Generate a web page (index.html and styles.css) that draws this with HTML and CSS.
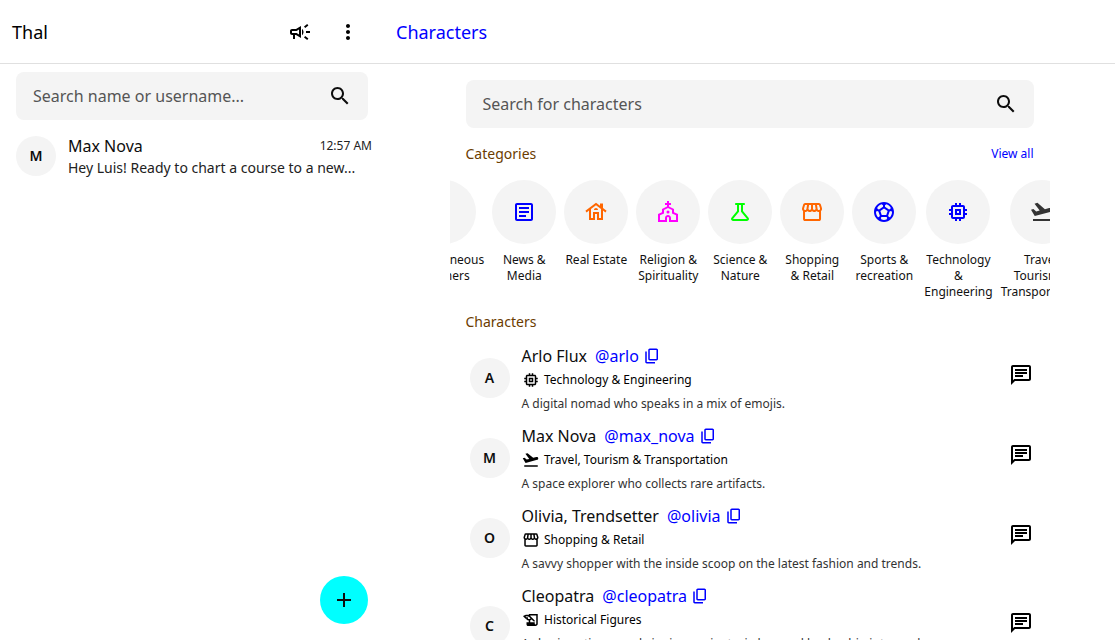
FILE: index.html
```html
<!DOCTYPE html>
<html lang="en">
<head>
<meta charset="utf-8">
<title>Thal</title>
<link rel="stylesheet" href="styles.css">
</head>
<body>
<svg class="sprite" aria-hidden="true">
  <symbol id="search" viewBox="0 0 24 24"><path d="M15.5 14h-.79l-.28-.27C15.41 12.59 16 11.11 16 9.5 16 5.91 13.09 3 9.5 3S3 5.91 3 9.5 5.91 16 9.5 16c1.61 0 3.09-.59 4.23-1.57l.27.28v.79l5 4.99L20.49 19zm-6 0C7.01 14 5 11.99 5 9.5S7.01 5 9.5 5 14 7.01 14 9.5 11.99 14 9.5 14"/></symbol>
  <symbol id="campaign" viewBox="0 0 24 24"><path d="M18 11v2h4v-2zm-2 6.61c.96.71 2.21 1.65 3.2 2.39.4-.53.8-1.07 1.2-1.6-.99-.74-2.24-1.68-3.2-2.4-.4.54-.8 1.08-1.2 1.61M20.4 5.6c-.4-.53-.8-1.07-1.2-1.6-.99.74-2.24 1.68-3.2 2.4.4.53.8 1.07 1.2 1.6.96-.72 2.21-1.65 3.2-2.4M4 9c-1.1 0-2 .9-2 2v2c0 1.1.9 2 2 2h1v4h2v-4h1l5 3V6L8 9zm5.03 1.71L11 9.53v4.94l-1.97-1.18-.48-.29H4v-2h4.55zM15.5 12c0-1.33-.58-2.53-1.5-3.35v6.69c.92-.81 1.5-2.01 1.5-3.34"/></symbol>
  <symbol id="more" viewBox="0 0 24 24"><path d="M12 8c1.1 0 2-.9 2-2s-.9-2-2-2-2 .9-2 2 .9 2 2 2m0 2c-1.1 0-2 .9-2 2s.9 2 2 2 2-.9 2-2-.9-2-2-2m0 6c-1.1 0-2 .9-2 2s.9 2 2 2 2-.9 2-2-.9-2-2-2"/></symbol>
  <symbol id="add" viewBox="0 0 24 24"><path d="M19 13h-6v6h-2v-6H5v-2h6V5h2v6h6z"/></symbol>
  <symbol id="article" viewBox="0 0 24 24"><path d="M19 5v14H5V5zm0-2H5c-1.1 0-2 .9-2 2v14c0 1.1.9 2 2 2h14c1.1 0 2-.9 2-2V5c0-1.1-.9-2-2-2M14 17H7v-2h7zm3-4H7v-2h10zm0-4H7V7h10z"/></symbol>
  <symbol id="house" viewBox="0 0 24 24"><path fill-rule="evenodd" d="M12 2.7 1.4 10.8l1.2 1.6L5 10.6V20h6v-6h2v6h6v-9.4l2.4 1.8 1.2-1.6L19 8V3.500h-3v2.2zM17 18h-2v-6H9v6H7V9.100l5-3.850 5 3.850zM10 10h4c0-1.100-.9-2-2-2s-2 .9-2 2"/></symbol>
  <symbol id="church" viewBox="0 0 24 24"><path d="M18 12.22V9l-5-2.5V5h2V3h-2V1h-2v2H9v2h2v1.5L6 9v3.22L2 14v8h9v-4c0-.55.45-1 1-1s1 .45 1 1v4h9v-8zM20 20h-5v-2.04c0-1.69-1.35-3.06-3-3.06s-3 1.37-3 3.06V20H4v-4.79l4-1.81v-3.35L12 8l4 2.04v3.35l4 1.81z"/><circle cx="12" cy="12" r="1.5"/></symbol>
  <symbol id="science" viewBox="0 -960 960 960"><path d="M200-120q-51 0-72.500-45.500T138-250l222-270v-240h-40q-17 0-28.500-11.500T280-800q0-17 11.500-28.500T320-840h320q17 0 28.500 11.500T680-800q0 17-11.500 28.500T640-760h-40v240l222 270q32 39 10.500 84.500T760-120H200Zm0-80h560L520-492v-268h-80v268L200-200Z"/></symbol>
  <symbol id="store" viewBox="0 -960 960 960"><path d="M841-518v318q0 33-23.500 56.500T761-120H201q-33 0-56.500-23.500T121-200v-318q-23-21-35.500-54t-.5-72l42-136q8-26 28.500-43t47.500-17h556q27 0 47 16.500t29 43.500l42 136q12 39-.5 71T841-518Zm-272-42q27 0 41-18.500t11-41.500l-22-140h-78v148q0 21 14 36.500t34 15.500Zm-180 0q23 0 37.500-15.500T441-612v-148h-78l-22 140q-4 24 10.500 42t37.500 18Zm-178 0q18 0 31.500-13t16.500-33l22-154h-78l-40 134q-6 20 6.500 43t41.500 23Zm540 0q29 0 42-23t6-43l-42-134h-76l22 154q3 20 16.500 33t31.500 13ZM201-200h560v-282q-5 2-6.500 2H751q-27 0-47.500-9T663-518q-18 18-41 28t-49 10q-27 0-50.500-10T481-518q-17 18-39.500 28T393-480q-29 0-52.500-10T299-518q-21 21-41.500 29.500T211-480h-4.500q-2.500 0-5.500-2v282Z"/></symbol>
  <symbol id="soccer" viewBox="0 0 24 24"><path d="M12 2C6.48 2 2 6.48 2 12s4.480 10 10 10 10-4.480 10-10S17.520 2 12 2m1 3.300 1.350-.95c1.820.56 3.370 1.760 4.380 3.340l-.39 1.340-1.350.46L13 6.700zm-3.350-.95L11 5.300v1.400L7.010 9.490l-1.350-.46-.39-1.340c1.010-1.570 2.560-2.770 4.380-3.340M7.080 17.110l-1.140.1C4.730 15.810 4 13.990 4 12c0-.12.01-.23.02-.35l1-.73 1.380.48 1.460 4.340zm7.420 2.480c-.79.26-1.630.41-2.500.41s-1.710-.15-2.500-.41l-.69-1.490.64-1.100h5.110l.64 1.110zM14.270 15H9.730l-1.350-4.020L12 8.440l3.630 2.540zm3.790 2.210-1.140-.1-.79-1.370L17.600 11.400l1.380-.47 1 .73c.01.11.02.22.02.34 0 1.990-.73 3.810-1.940 5.210"/></symbol>
  <symbol id="memory" viewBox="0 0 24 24"><path d="M15 9H9v6h6zm-2 4h-2v-2h2zm8-2V9h-2V7c0-1.1-.9-2-2-2h-2V3h-2v2h-2V3H9v2H7c-1.1 0-2 .9-2 2v2H3v2h2v2H3v2h2v2c0 1.1.9 2 2 2h2v2h2v-2h2v2h2v-2h2c1.1 0 2-.9 2-2v-2h2v-2h-2v-2h2zm-4 6H7V7h10z"/></symbol>
  <symbol id="takeoff" viewBox="0 -960 960 960"><path d="M120-120v-80h720v80H120Zm70-200L40-570l96-26 112 94 140-37-207-276 116-31 299 251 170-46q32-9 60.500 7.500T864-585q9 32-7.500 60.500T808-487L190-320Z"/></symbol>
  <symbol id="history" viewBox="0 0 24 24"><path d="M9 4v1.38c-.83-.33-1.72-.5-2.61-.5-1.79 0-3.58.68-4.95 2.05l3.33 3.33h1.11v1.11c.86.86 1.98 1.31 3.11 1.36V15H6v3c0 1.1.9 2 2 2h10c1.66 0 3-1.34 3-3V4zm-1.11 6.41V8.26H5.61L4.57 7.22a5.07 5.07 0 0 1 1.82-.34c1.34 0 2.59.52 3.54 1.46l1.41 1.41-.2.2c-.51.51-1.19.8-1.92.8-.47 0-.93-.12-1.33-.34M19 17c0 .55-.45 1-1 1s-1-.45-1-1v-2h-6v-2.59c.57-.23 1.1-.57 1.56-1.03l.2-.2L15.59 14H17v-1.41l-6-5.97V6h8z"/></symbol>
  <symbol id="chat" viewBox="0 0 24 24"><path d="M4 4h16v12H5.17L4 17.17zm0-2c-1.1 0-1.99.9-1.99 2L2 22l4-4h14c1.1 0 2-.9 2-2V4c0-1.1-.9-2-2-2zm2 10h8v2H6zm0-3h12v2H6zm0-3h12v2H6z"/></symbol>
  <symbol id="copy" viewBox="0 -960 960 960"><path d="M360-240q-33 0-56.500-23.500T280-320v-480q0-33 23.500-56.500T360-880h360q33 0 56.500 23.500T800-800v480q0 33-23.500 56.500T720-240H360Zm0-80h360v-480H360v480ZM200-80q-33 0-56.500-23.500T120-160v-560h80v560h440v80H200Z"/></symbol>
</svg>
<div class="app">
  <header class="topbar">
    <div class="topbar-left">
      <h1 class="title">Thal</h1>
      <button class="icon-btn" aria-label="Announcements"><svg class="icon"><use href="#campaign"/></svg></button>
      <button class="icon-btn" aria-label="Menu"><svg class="icon"><use href="#more"/></svg></button>
    </div>
    <a class="title title-link">Characters</a>
  </header>
  <div class="panes">
    <aside class="sidebar">
      <div class="search"><span>Search name or username...</span><svg class="icon"><use href="#search"/></svg></div>
      <div class="chat">
        <div class="avatar">M</div>
        <div class="chat-text">
          <div class="chat-head"><span class="name">Max Nova</span><time>12:57 AM</time></div>
          <p class="preview">Hey Luis! Ready to chart a course to a new...</p>
        </div>
      </div>
      <button class="fab" aria-label="New chat"><svg class="icon"><use href="#add"/></svg></button>
    </aside>
    <main class="main">
      <div class="search search-main"><span>Search for characters</span><svg class="icon"><use href="#search"/></svg></div>
      <div class="section-head"><h2>Categories</h2><a>View all</a></div>
      <div class="categories">
        <div class="category"><div class="disc"></div>Miscellaneous<br>&amp; Others</div>
        <div class="category"><div class="disc blue"><svg class="icon"><use href="#article"/></svg></div>News &amp; Media</div>
        <div class="category"><div class="disc orange"><svg class="icon"><use href="#house"/></svg></div>Real Estate</div>
        <div class="category"><div class="disc magenta"><svg class="icon"><use href="#church"/></svg></div>Religion &amp; Spirituality</div>
        <div class="category"><div class="disc lime"><svg class="icon"><use href="#science"/></svg></div>Science &amp; Nature</div>
        <div class="category"><div class="disc orange"><svg class="icon"><use href="#store"/></svg></div>Shopping &amp; Retail</div>
        <div class="category"><div class="disc blue"><svg class="icon"><use href="#soccer"/></svg></div>Sports &amp; recreation</div>
        <div class="category"><div class="disc blue"><svg class="icon"><use href="#memory"/></svg></div>Technology &amp; Engineering</div>
        <div class="category"><div class="disc dark"><svg class="icon"><use href="#takeoff"/></svg></div>Travel, Tourism &amp; Transportation</div>
      </div>
      <div class="section-head section-list"><h2>Characters</h2></div>
      <div class="character">
        <div class="avatar">A</div>
        <div class="info">
          <div class="name">Arlo Flux <a>@arlo<svg class="icon-sm"><use href="#copy"/></svg></a></div>
          <div class="tag"><svg class="icon-sm"><use href="#memory"/></svg><span>Technology &amp; Engineering</span></div>
          <p>A digital nomad who speaks in a mix of emojis.</p>
        </div>
        <svg class="icon message"><use href="#chat"/></svg>
      </div>
      <div class="character">
        <div class="avatar">M</div>
        <div class="info">
          <div class="name">Max Nova <a>@max_nova<svg class="icon-sm"><use href="#copy"/></svg></a></div>
          <div class="tag"><svg class="icon-sm"><use href="#takeoff"/></svg><span>Travel, Tourism &amp; Transportation</span></div>
          <p>A space explorer who collects rare artifacts.</p>
        </div>
        <svg class="icon message"><use href="#chat"/></svg>
      </div>
      <div class="character">
        <div class="avatar">O</div>
        <div class="info">
          <div class="name">Olivia, Trendsetter <a>@olivia<svg class="icon-sm"><use href="#copy"/></svg></a></div>
          <div class="tag"><svg class="icon-sm"><use href="#store"/></svg><span>Shopping &amp; Retail</span></div>
          <p>A savvy shopper with the inside scoop on the latest fashion and trends.</p>
        </div>
        <svg class="icon message"><use href="#chat"/></svg>
      </div>
      <div class="character">
        <div class="avatar">C</div>
        <div class="info">
          <div class="name">Cleopatra <a>@cleopatra<svg class="icon-sm"><use href="#copy"/></svg></a></div>
          <div class="tag"><svg class="icon-sm"><use href="#history"/></svg><span>Historical Figures</span></div>
          <p>A charismatic queen bringing ancient wisdom and leadership into modern<br>conversations.</p>
        </div>
        <svg class="icon message"><use href="#chat"/></svg>
      </div>
    </main>
  </div>
</div>
</body>
</html>
```

FILE: styles.css
```css
* { box-sizing: border-box; }
body { margin: 0; background: #fff; color: #0d0d0d; font-family: "Noto Sans", sans-serif; }
h1, h2, p { margin: 0; font-weight: 400; }
button { border: 0; padding: 0; background: none; color: inherit; }
.sprite { display: none; }
.icon, .icon-sm { display: block; flex: none; width: 24px; height: 24px; fill: currentColor; }
.icon-sm { width: 18px; height: 18px; }
.app { display: flex; flex-direction: column; height: 640px; overflow: hidden; }
.topbar { display: flex; align-items: center; flex: none; height: 64px; border-bottom: 1px solid #e0e0e0; color: #000; }
.topbar-left { display: flex; align-items: center; width: 384px; padding: 0 12px; }
.title { flex: 1; font-size: 18px; line-height: 28px; }
.title-link { padding-left: 12px; color: #00f; }
.icon-btn { display: flex; align-items: center; justify-content: center; width: 48px; height: 48px; }
.panes { display: flex; flex: 1; min-height: 0; }
.sidebar { display: flex; flex-direction: column; width: 384px; flex: none; padding: 8px 12px 16px 16px; }
.search { display: flex; align-items: center; justify-content: space-between; height: 48px; flex: none; padding: 0 16px 0 17px; border-radius: 8px; background: #f4f4f4; font-size: 16px; }
.search span { color: #555; }
.sidebar .search { margin-right: 4px; }
.chat { display: flex; gap: 12px; padding-top: 16px; }
.avatar { display: flex; align-items: center; justify-content: center; width: 40px; height: 40px; flex: none; border-radius: 50%; background: #f4f4f4; font-size: 14px; line-height: 20px; font-weight: 600; }
.chat-text { flex: 1; margin-top: -2px; }
.chat-head { display: flex; align-items: center; justify-content: space-between; height: 24px; font-size: 16px; }
time { font-size: 12px; line-height: 16px; color: #222; }
.preview { font-size: 14px; line-height: 20px; color: #222; }
.fab { display: flex; align-items: center; justify-content: center; width: 48px; height: 48px; margin: auto 4px 0 auto; border-radius: 50%; background: #0ff; }
.main { width: 600px; margin: 0 auto; padding-top: 16px; }
.search-main { margin: 0 16px; }
.section-head { display: flex; align-items: center; justify-content: space-between; height: 20px; margin: 16px 16px 0; }
.section-head h2 { font-size: 14px; line-height: 20px; color: #6b3c00; }
.section-head a { font-size: 12px; line-height: 16px; color: #00f; }
.categories { display: flex; gap: 8px; overflow: hidden; margin-top: 16px; height: 120px; }
.category { flex: none; width: min-content; min-width: 64px; font-size: 12px; line-height: 16px; text-align: center; color: #111; }
.category:first-child { margin-left: -45px; }
.disc { display: flex; align-items: center; justify-content: center; width: 64px; height: 64px; margin: 0 auto 8px; border-radius: 50%; background: #f4f4f4; }
.blue { color: #00f; }
.orange { color: #f60; }
.magenta { color: #f0f; }
.lime { color: #0f0; }
.dark { color: #333; }
.section-list { margin: 12px 16px 6px; }
.character { display: flex; align-items: center; gap: 12px; padding: 6px 16px 6px 20px; }
.info { flex: 1; }
.info .name { display: flex; align-items: center; gap: 8px; height: 24px; font-size: 16px; }
.info a { display: flex; align-items: center; gap: 4px; color: #00f; }
.tag { display: flex; align-items: center; gap: 4.5px; height: 24px; font-size: 12px; line-height: 16px; color: #000; }
.tag span { padding-bottom: 1px; }
.info p { margin-top: 4px; font-size: 12px; line-height: 16px; color: #333; }
.message { margin: 0 .4px 7px 0; color: #000; }
```
